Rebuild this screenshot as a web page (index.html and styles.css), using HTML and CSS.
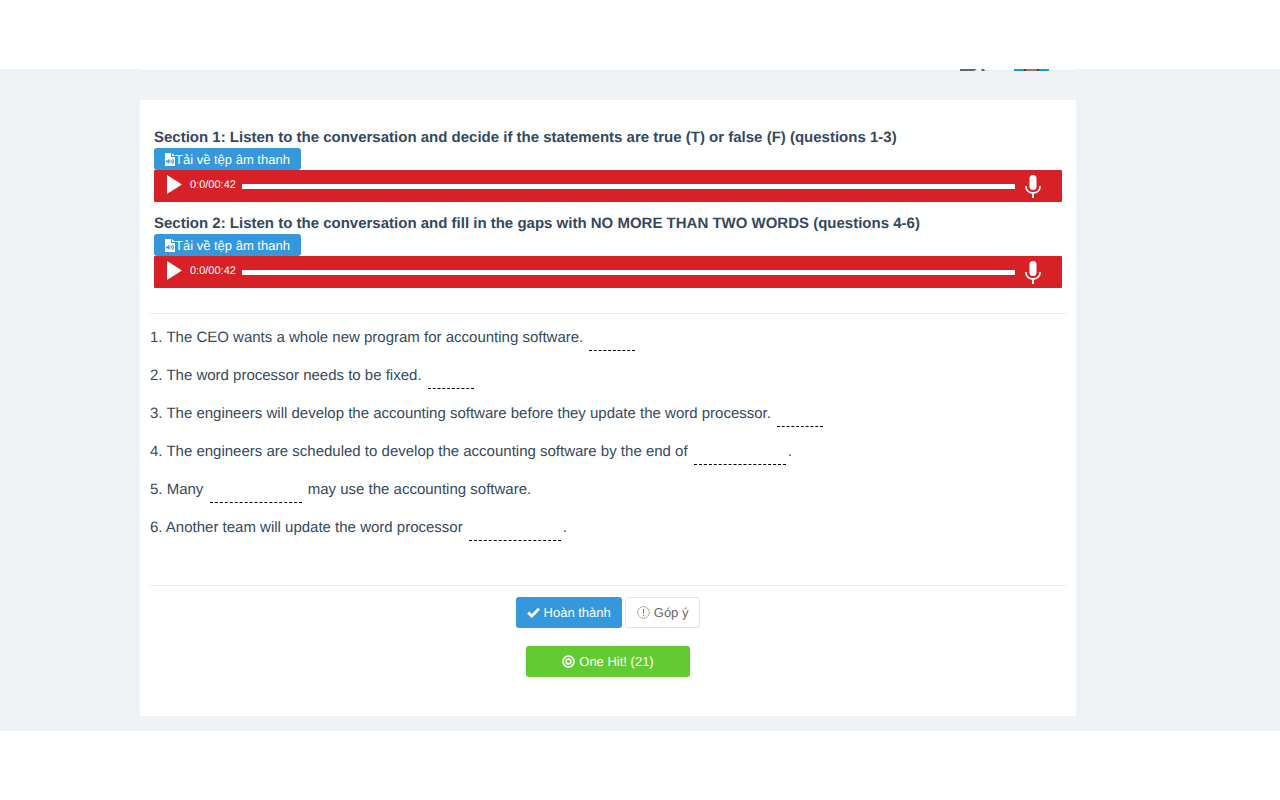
FILE: index.html
```html
<!DOCTYPE html>
<html lang="vi">

<head>
    <meta charset="UTF-8" />
    <meta name="viewport" content="width=device-width, initial-scale=1.0" />
    <title>Listening test</title>

    <link rel="stylesheet" href="styles.css">
</head>

<body>
    <!-- shared icons -->
    <svg class="sprite" aria-hidden="true">
        <symbol id="icon-file" viewBox="0 0 10 13">
            <path d="M0 0h6v4h4v9H0z" fill="#fff" />
            <path d="M7 0l3 3H7z" fill="#fff" />
            <path d="M1 7.500h1.500l2-1.900v5.400L2.500 9.300H1z" fill="#3598dc" />
            <path d="M5.700 7q1.200 1.300 0 2.600M7.200 5.800q2.400 2.500 0 5" fill="none" stroke="#3598dc" stroke-width="1.100" />
        </symbol>
        <symbol id="icon-play" viewBox="0 0 15 19">
            <path d="M0 0l15 9.500L0 19z" fill="#fff" />
        </symbol>
        <symbol id="icon-mic" viewBox="0 0 16 23">
            <rect x="4.500" y="0" width="7" height="15" rx="3.500" fill="#fff" />
            <path d="M.9 11c0 4.500 3 7 7.100 7s7.100-2.500 7.100-7M8 18v5" fill="none" stroke="#fff" stroke-width="1.800" />
        </symbol>
    </svg>

    <div class="page">
        <header>
            <svg class="menu-icon" viewBox="0 0 26 2" aria-hidden="true">
                <path d="M0 0h17l-3 2H0zM21 0h3l1 2h-3z" fill="#666" />
            </svg>
            <svg class="avatar" viewBox="0 0 35 2" aria-hidden="true">
                <path d="M0 0h35v2H0z" fill="#00a5e0" />
                <path d="M10 0h15v2H10z" fill="#444" />
                <path d="M12 0h11v2H12z" fill="#a0755c" />
            </svg>
        </header>

        <main>
            <div class="audio-list">
                <section>
                    <h2>Section 1: Listen to the conversation and decide if the statements are true (T) or false (F) (questions 1-3)</h2>
                    <button type="button" class="button button-download"><svg class="icon-file"><use href="#icon-file" /></svg>Tải về tệp âm thanh</button>
                    <div class="player">
                        <button type="button" class="button-play" aria-label="Play"><svg><use href="#icon-play" /></svg></button>
                        <span class="time">0:0/00:42</span>
                        <div class="track"></div>
                        <svg class="icon-mic"><use href="#icon-mic" /></svg>
                    </div>
                </section>
                <section>
                    <h2>Section 2: Listen to the conversation and fill in the gaps with NO MORE THAN TWO WORDS (questions 4-6)</h2>
                    <button type="button" class="button button-download"><svg class="icon-file"><use href="#icon-file" /></svg>Tải về tệp âm thanh</button>
                    <div class="player">
                        <button type="button" class="button-play" aria-label="Play"><svg><use href="#icon-play" /></svg></button>
                        <span class="time">0:0/00:42</span>
                        <div class="track"></div>
                        <svg class="icon-mic"><use href="#icon-mic" /></svg>
                    </div>
                </section>
            </div>

            <form>
                <div class="questions">
                    <p><label for="q1">1. The CEO wants a whole new program for accounting software.</label> <input type="text" id="q1" name="q1" class="short"></p>
                    <p><label for="q2">2. The word processor needs to be fixed.</label> <input type="text" id="q2" name="q2" class="short"></p>
                    <p><label for="q3">3. The engineers will develop the accounting software before they update the word processor.</label> <input type="text" id="q3" name="q3" class="short"></p>
                    <p><label for="q4">4. The engineers are scheduled to develop the accounting software by the end of</label> <input type="text" id="q4" name="q4">.</p>
                    <p><label for="q5">5. Many</label> <input type="text" id="q5" name="q5"> may use the accounting software.</p>
                    <p><label for="q6">6. Another team will update the word processor</label> <input type="text" id="q6" name="q6">.</p>
                </div>

                <div class="actions">
                    <div class="button-wrapper">
                        <button type="button" class="button button-submit">
                            <svg width="13" height="11" viewBox="0 0 13 11"><path d="M1.200 5.500l3.600 3.600L12 1.600" fill="none" stroke="#fff" stroke-width="2.800" /></svg>
                            Hoàn thành
                        </button>
                        <button type="button" class="button button-feedback">
                            <svg width="13" height="13" viewBox="0 0 13 13"><circle cx="6.500" cy="6.500" r="5.800" fill="none" stroke="#777" stroke-width=".9" stroke-dasharray="1.600 .7" /><path d="M6.500 3v4.800M6.500 8.800v1.200" stroke="#777" /></svg>
                            Góp ý
                        </button>
                    </div>
                    <button type="button" class="button button-hit">
                        <svg width="13" height="13" viewBox="0 0 13 13" fill="none" stroke="#fff" stroke-width="1.600"><circle cx="6.500" cy="6.500" r="5.500" /><circle cx="6.500" cy="6.500" r="2.400" /></svg>
                        One Hit! (21)
                    </button>
                </div>
            </form>
        </main>
    </div>
</body>

</html>
```
FILE: styles.css
```css
:root {
    --bg-page: #eef2f5;
    --bg-primary: #3598dc;
    --bg-player: #d82027;
    --bg-success: #62cb31;
    --text: #34495e;
    --line: #eeeeee;
}

* {
    box-sizing: border-box;
}

body {
    margin: 0;
    background-color: #fff;
    color: var(--text);
    font-family: "Liberation Sans", Arial, sans-serif;
    font-size: 15px;
    text-rendering: geometricPrecision;
}

svg {
    display: block;
}

.sprite {
    display: none;
}

.page {
    margin: 69px 0;
    padding: 0 204px 15px 140px;
    background-color: var(--bg-page);
}

header {
    display: flex;
    justify-content: flex-end;
    gap: 28px;
    height: 2px;
    padding-right: 27px;
    margin-bottom: 29px;
    background-color: #fff;
    border-bottom: 1px solid #eaedef;
}

.menu-icon {
    width: 26px;
    height: 2px;
}

.avatar {
    width: 35px;
    height: 2px;
}

main {
    background-color: #fff;
    border-radius: 2px;
    padding: 28px 9px 39px;
}

.audio-list {
    padding: 0 5px 25px;
}

section + section {
    margin-top: 12px;
}

h2 {
    margin: 0;
    font-size: 15px;
    line-height: 20px;
}

.button {
    display: flex;
    align-items: center;
    justify-content: center;
    gap: 4px;
    border: 0;
    border-radius: 3px;
    height: 31px;
    padding: 0 11px;
    color: #fff;
    font-family: inherit;
    font-size: 13px;
    text-rendering: inherit;
    cursor: pointer;
}

.button-download {
    gap: 0;
    height: 22px;
    background-color: var(--bg-primary);
}

.icon-file {
    width: 10px;
    height: 13px;
}

.player {
    display: flex;
    align-items: center;
    height: 32px;
    padding: 0 21px 0 13px;
    border-radius: 1px;
    background-color: var(--bg-player);
    color: #fff;
}

.button-play {
    padding: 0 0 3px;
    border: 0;
    background: none;
    cursor: pointer;

    svg {
        width: 15px;
        height: 19px;
    }
}

.time {
    margin: 0 6px 0 8px;
    padding-bottom: 2px;
    font-size: 11px;
}

.track {
    flex: 1;
    height: 5px;
    background-color: #fff;
}

.icon-mic {
    width: 16px;
    height: 23px;
    margin-left: 10px;
}

.questions {
    padding: 5px 1px 38px;
    border-top: 1px solid var(--line);
    border-bottom: 1px solid var(--line);

    p {
        margin: 0;
        line-height: 38px;
    }

    input {
        width: 92px;
        height: 26px;
        margin: 0 2px;
        padding: 0;
        border: 0;
        border-bottom: 1px dashed #000;
        background: none;
        color: inherit;
        font: inherit;
        vertical-align: middle;
    }

    .short {
        width: 46px;
    }
}

.actions {
    display: flex;
    flex-direction: column;
    align-items: center;
    gap: 18px;
    padding-top: 11px;
}

.button-wrapper {
    display: flex;
    gap: 3px;
}

.button-submit {
    background-color: var(--bg-primary);
}

.button-feedback {
    border: 1px solid #e4e4e4;
    background-color: #fff;
    color: #666;
}

.button-hit {
    width: 164px;
    background-color: var(--bg-success);
}
```
